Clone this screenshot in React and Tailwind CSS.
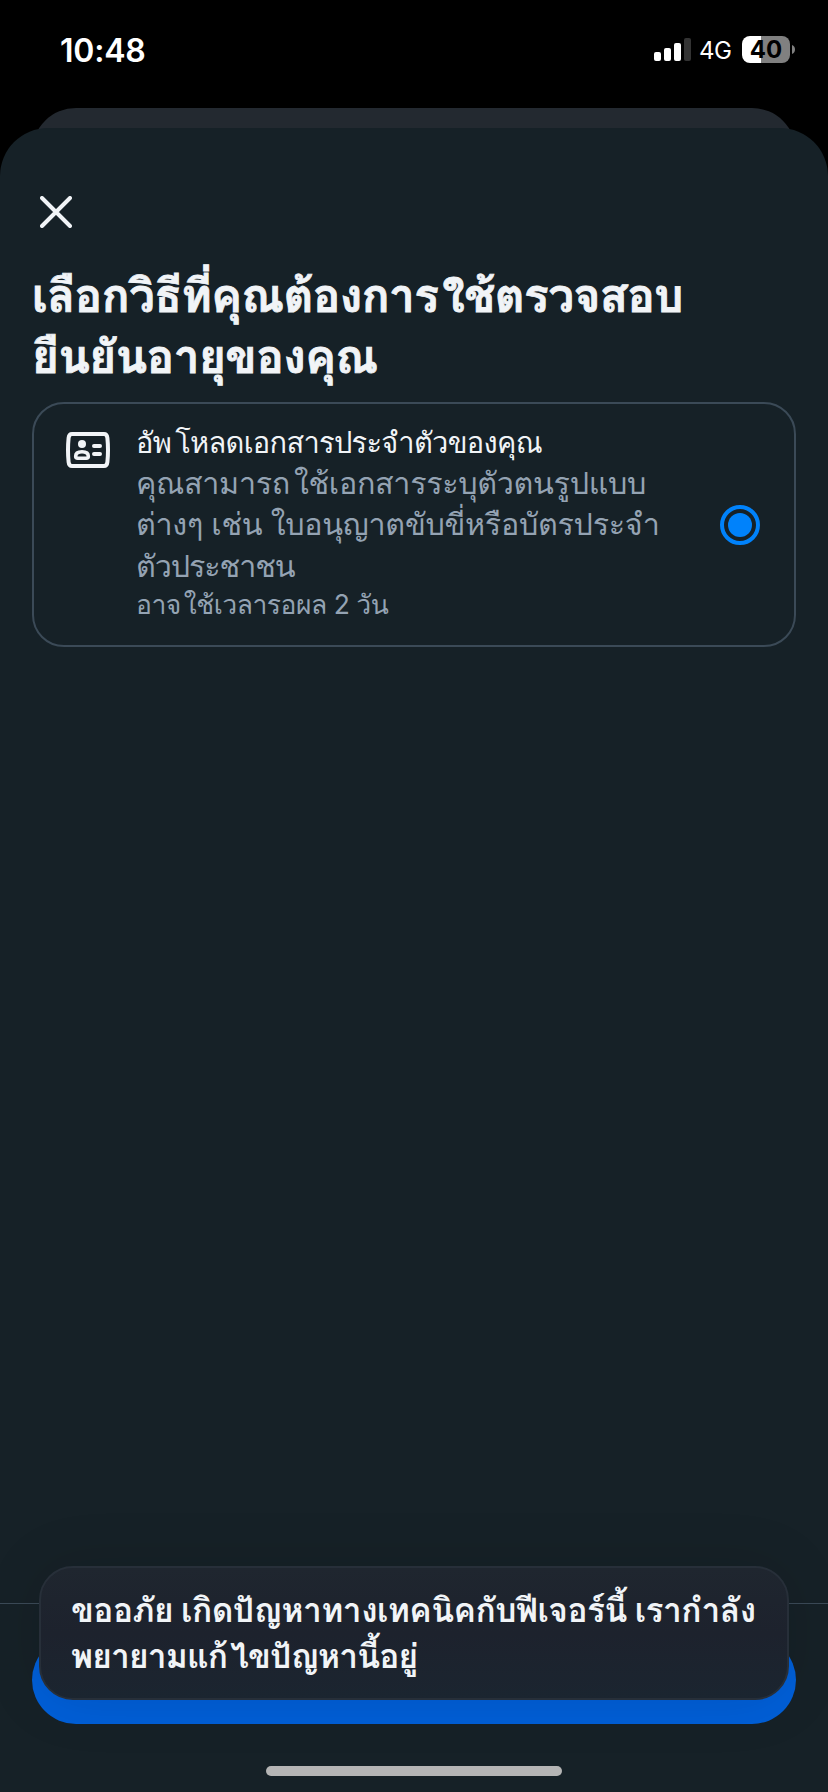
const thai = "font-['Inter','Loma','Noto_Sans_Thai_Looped',sans-serif]";

function StatusBar() {
  return (
    <header className="flex h-[108px] shrink-0 items-start justify-between pl-[60px] pr-[33px] pt-9 font-['Inter',sans-serif] text-white">
      <div className="mt-[-1px] text-[32px] leading-8 font-semibold tracking-[-0.2px]">10:48</div>
      <div className="flex h-[27px] items-start">
        <svg className="mt-[2px] h-[23px] w-[37px]" viewBox="0 0 37 23" fill="#fff">
          <rect x="0" y="14" width="7" height="9" rx="2" />
          <rect x="10" y="10" width="7" height="13" rx="2" />
          <rect x="20" y="5" width="7" height="18" rx="2" />
          <rect x="30" y="0" width="7" height="23" rx="2" fill="#333" />
        </svg>
        <span className="ml-[8px] mt-[2px] w-[34px] text-[24px] leading-[25px] tracking-[-0.5px]">4G</span>
        <div className="ml-[9px] h-[27px] w-12 rounded-[8px] bg-[linear-gradient(90deg,#fff_40%,#808080_40%)] text-center text-[24px] leading-[28px] font-bold text-black">40</div>
        <svg className="ml-[2px] mt-[9px] h-[9px] w-[3px]" viewBox="0 0 3 9" fill="#808080">
          <path d="M0 0C2 .8 3 2.5 3 4.5S2 8.2 0 9Z" />
        </svg>
      </div>
    </header>
  );
}

function IdCardIcon() {
  return (
    <svg className="h-9 w-11" viewBox="0 0 44 36" fill="none">
      <path d="M6 2H38Q41 2 41.400 6Q42.600 18 41.400 30Q41 34 38 34H6Q3 34 2.600 30Q1.400 18 2.600 6Q3 2 6 2Z" stroke="#f1f4f7" strokeWidth="4" />
      <circle cx="16" cy="12" r="4" fill="#f1f4f7" />
      <path d="M16 19.700c4 0 6.300 1.800 6.300 4.500 0 1.400-.7 2-2 2h-8.600c-1.300 0-2-.6-2-2 0-2.700 2.300-4.500 6.300-4.500Z" stroke="#f1f4f7" strokeWidth="3.600" />
      <path d="M28 14h6M28 22h6" stroke="#f1f4f7" strokeWidth="4" strokeLinecap="round" />
    </svg>
  );
}

export default function App() {
  return (
    <div className={`flex h-[1792px] w-[828px] flex-col overflow-hidden bg-black ${thai}`}>
      <StatusBar />
      <div className="mx-[32px] h-[60px] shrink-0 rounded-t-[44px] bg-[#232930]" />
      <main className="relative mt-[-40px] flex grow flex-col rounded-t-[48px] bg-[#162127]">
        <button className="ml-[40px] mt-[68px] size-8">
          <svg viewBox="0 0 32 32" className="size-8" stroke="#f1f4f7" strokeWidth="4" strokeLinecap="round">
            <path d="M2 2L30 30M30 2L2 30" />
          </svg>
        </button>
        <h1 className="ml-8 mt-[37px] text-[46px] leading-[61px] font-bold whitespace-nowrap text-[#f1f4f7] [-webkit-text-stroke:0.8px_#f1f4f7]">
          <span className="block h-[61px] tracking-[-0.6px]">เลือกวิธีที่คุณต้องการ<span className="ml-[4px]">ใช้ตรวจสอบ</span></span>
          <span className="block h-[61px] tracking-[-0.55px]">ยืนยันอายุของคุณ</span>
        </h1>
        <section className="mx-8 mt-[15px] flex h-[245px] items-start rounded-[32px] border-2 border-[#3b4a57] pt-[18px] pl-[32px] pr-[34px]">
          <div className="mt-[10px]"><IdCardIcon /></div>
          <div className="ml-[26px] grow text-[30.5px] leading-[41px] whitespace-nowrap text-[#94a3b3]">
            <p className="h-[40px] text-[29px] leading-[42px] tracking-[-0.7px] text-[#f1f4f7]">อัพ<span className="ml-[4px]">โหลดเอกสารประจำตัวของคุณ</span></p>
            <p className="h-[41px] tracking-[-0.33px]">คุณสามารถ<span className="ml-[4px]">ใช้เอกสารระบุตัวตนรูปแบบ</span></p>
            <p className="h-[42px] tracking-[-0.3px]">ต่างๆ เช่น ใบอนุญาตขับขี่หรือบัตรประจำ</p>
            <p className="h-[41px] tracking-[-1.1px]">ตัวประชาชน</p>
            <p className="h-[37px] text-[26.5px] leading-[37px] tracking-[-0.5px]">อาจ<span className="ml-[3px]">ใช้เวลารอผล 2 วัน</span></p>
          </div>
          <div className="mt-[83px] flex size-10 shrink-0 items-center justify-center rounded-full border-4 border-[#0082fb]">
            <div className="size-6 rounded-full bg-[#0082fb]" />
          </div>
        </section>
        <footer className="mt-auto flex h-[189px] flex-col items-center border-t border-[#3b4a57] pt-[32px]">
          <button className="h-[88px] w-[764px] rounded-full bg-[#005fd8]" />
          <div className="mt-[42px] h-[10px] w-[296px] rounded-full bg-[#b5b5b5]" />
        </footer>
        <div className="absolute top-[1438px] left-[39px] h-[134px] w-[750px] rounded-[34px] border-2 border-[#272f39] bg-[linear-gradient(180deg,#1f262f,#1d222d_50%,#1b2530)] pt-[19px] pl-[30px] text-[33.5px] leading-[46px] font-semibold whitespace-nowrap text-[#f1f4f7] shadow-[0_0_60px_rgba(0,0,0,0.12)]">
          <p className="h-[46px] tracking-[-0.55px]">ขออภัย เกิดปัญหาทางเทคนิคกับฟีเจอร์นี้ เรากำลัง</p>
          <p className="h-[46px] tracking-[-0.85px]">พยายามแก้<span className="ml-[3px]">ไขปัญหานี้อยู่</span></p>
        </div>
      </main>
    </div>
  );
}
